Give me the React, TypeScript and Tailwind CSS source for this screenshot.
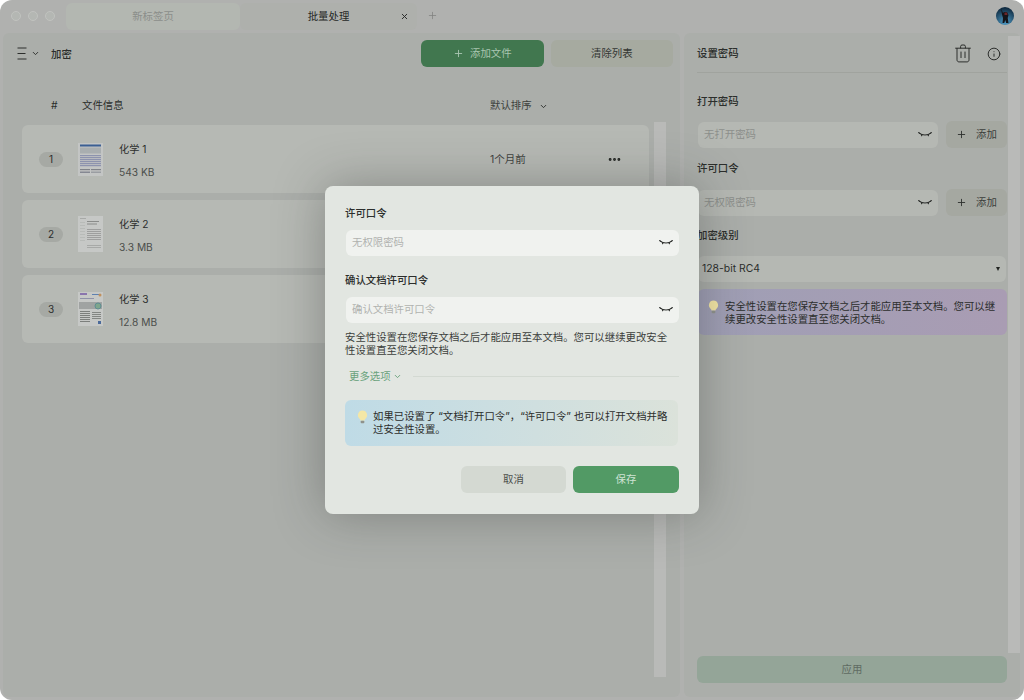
import { Plus, ChevronDown, X, Ellipsis, Info } from "lucide-react";

function EyeClosed({ className = "" }: { className?: string }) {
  return (
    <svg width="14" height="8" viewBox="0 0 14 8" fill="none" stroke="#2a2c2a" strokeWidth="1.1" strokeLinecap="round" className={className}>
      <path d="M1.5 2.2C3.5 4.6 10.5 4.6 12.5 2.2" />
      <path d="M1.5 2.2 0.6 1.6M12.5 2.2l.9-.6M4 3.9l-.5.8M10 3.9l.5.8" />
    </svg>
  );
}

function Bulb() {
  return (
    <svg width="11" height="14" viewBox="0 0 11 14" className="shrink-0">
      <path d="M5.5.6a4.6 4.6 0 0 0-2.7 8.3c.5.4.7 1 .8 1.6h3.8c.1-.6.3-1.2.8-1.6A4.6 4.6 0 0 0 5.5.6Z" fill="#f4e7a6" />
      <rect x="3.7" y="10.8" width="3.6" height="2.4" rx="0.8" fill="#8f928c" />
    </svg>
  );
}

function Trash() {
  return (
    <svg width="16" height="19" viewBox="0 0 16 19" fill="none" stroke="#2c2e2c" strokeWidth="1" strokeLinecap="round" strokeLinejoin="round">
      <path d="M.6 4.2h14.8" />
      <path d="M5.6 4V2.4c0-.9.6-1.4 1.4-1.4h2c.8 0 1.4.5 1.4 1.4V4" />
      <path d="M2 4.4v11.4c0 1.3.8 2.1 2.1 2.1h7.8c1.3 0 2.1-.8 2.1-2.1V4.4" />
      <path d="M6 8v5.6M10 8v5.6" />
    </svg>
  );
}

function Avatar() {
  return (
    <svg width="18" height="18" viewBox="0 0 18 18">
      <defs>
        <radialGradient id="sky" cx="50%" cy="85%" r="80%">
          <stop offset="0%" stopColor="#4f9dc8" />
          <stop offset="100%" stopColor="#0f2a40" />
        </radialGradient>
      </defs>
      <circle cx="9" cy="9" r="9" fill="url(#sky)" />
      <path d="M5 1.5 7 6l1-1h3l1.5 3-.8 3 .8 5H10l-.7-3-1 3H6.5l.5-5-1-3.5Z" fill="#15151a" />
      <path d="M8.5 5.5H11l.5 2.5H8.5Z" fill="#6d2528" />
    </svg>
  );
}

function DocOne() {
  return (
    <svg width="25" height="33" viewBox="0 0 25 33" className="shrink-0">
      <rect width="25" height="33" fill="#c3c5c4" />
      <rect x="2" y="1.5" width="21" height="2" fill="#3b5f93" />
      <rect x="2" y="4.5" width="21" height="6" fill="#a9aeb0" />
      {[12, 14, 16, 18, 20, 22].map((y) => (
        <rect key={y} x="2" y={y} width="21" height="1.2" fill="#8d93ae" />
      ))}
      <rect x="2" y="26" width="10" height="1.2" fill="#80838a" />
      <rect x="13" y="26" width="10" height="1.2" fill="#80838a" />
      <rect x="2" y="28.5" width="10" height="1.5" fill="#858892" />
      <rect x="13" y="28.5" width="10" height="1.5" fill="#9a9da2" />
    </svg>
  );
}

function DocTwo() {
  return (
    <svg width="25" height="36" viewBox="0 0 25 36" className="shrink-0">
      <rect width="25" height="36" fill="#c6c8c6" />
      <rect x="2" y="2" width="6" height="1" fill="#a8aaa8" />
      {[6, 9, 12, 15, 18, 21, 24].map((y) => (
        <rect key={y} x="2" y={y} width="5" height="0.6" fill="#b0b2b0" />
      ))}
      <rect x="9" y="5" width="12" height="1" fill="#8a8c8a" />
      <rect x="9" y="7.5" width="10" height="1" fill="#8a8c8a" />
      {[13, 15, 17, 19, 21, 23].map((y) => (
        <rect key={y} x="9" y={y} width="14" height="0.7" fill="#8d8f8d" />
      ))}
      <rect x="9" y="29" width="14" height="0.7" fill="#9a9c9a" />
      <rect x="9" y="31" width="14" height="0.7" fill="#9a9c9a" />
    </svg>
  );
}

function DocThree() {
  return (
    <svg width="25" height="34" viewBox="0 0 25 34" className="shrink-0">
      <rect width="25" height="34" fill="#c6c8c6" />
      <rect x="2" y="1" width="7" height="2" fill="#8a75ad" />
      <rect x="14" y="2" width="8" height="1" fill="#5d80b0" />
      <circle cx="22" cy="3" r="1.5" fill="#c0905d" />
      <rect x="2" y="6" width="14" height="1" fill="#8f92a8" />
      <rect x="1" y="10" width="23" height="7" fill="#a0a3a2" />
      <circle cx="20" cy="14" r="3" fill="#7fa68d" stroke="#5f8d92" />
      {[19, 21, 23, 25, 27, 29].map((y) => (
        <rect key={y} x="2" y={y} width="10" height="0.9" fill="#747674" />
      ))}
      {[20, 22, 24, 26].map((y) => (
        <rect key={y} x="14" y={y} width="9" height="0.9" fill="#7c7e7c" />
      ))}
      <rect x="20" y="29" width="3" height="3" fill="#4b6a9a" />
    </svg>
  );
}

const files = [
  { n: 1, name: "化学 1", size: "543 KB", date: "1个月前", Doc: DocOne },
  { n: 2, name: "化学 2", size: "3.3 MB", date: "", Doc: DocTwo },
  { n: 3, name: "化学 3", size: "12.8 MB", date: "", Doc: DocThree },
];

function FileRow({ file }: { file: (typeof files)[number] }) {
  return (
    <div className="flex h-[68px] items-center rounded-[6px] bg-[#b6b9b4] pl-[17px]">
      <span className="flex h-[15px] w-[24px] items-center justify-center rounded-full bg-[#a6a9a4] text-[10px] text-[#2c2e2c]">{file.n}</span>
      <div className="ml-[15px] flex w-[25px] justify-center">
        <file.Doc />
      </div>
      <div className="ml-[16px] flex w-[371px] flex-col gap-[10px] pt-[4px]">
        <span className="text-[10.2px] leading-[13px] text-[#2c2e2c]">{file.name}</span>
        <span className="text-[10.2px] leading-[13px] text-[#4b4e4b]">{file.size}</span>
      </div>
      <span className="w-[117px] pt-[1px] text-[10.5px] text-[#3f423f]">{file.date}</span>
      {file.date && <Ellipsis size={15} strokeWidth={2.6} className="text-[#222422]" />}
    </div>
  );
}

function SideInput({ placeholder }: { placeholder: string }) {
  return (
    <div className="flex items-center gap-[8px]">
      <div className="flex h-[26px] w-[240px] items-center justify-between rounded-[6px] bg-[#b5b8b3] pl-[6px] pr-[6px] text-[10.4px] text-[#8c8f8b]">
        {placeholder}
        <EyeClosed />
      </div>
      <div className="flex h-[27px] w-[61px] items-center justify-center gap-[9px] rounded-[6px] bg-[#a5a8a1] text-[10.4px] text-[#3c3f3c]">
        <Plus size={11} strokeWidth={2} className="text-[#2f312f]" />
        添加
      </div>
    </div>
  );
}

function ModalInput({ placeholder }: { placeholder: string }) {
  return (
    <div className="ml-px flex h-[26px] items-center justify-between rounded-[6px] bg-[#f0f2ef] px-[6px] text-[10.4px] text-[#b0b3af]">
      {placeholder}
      <EyeClosed />
    </div>
  );
}

export default function App() {
  return (
    <div className="relative flex h-[700px] w-[1024px] flex-col overflow-hidden rounded-[12px] bg-[#b0b1af] font-['Inter','Noto_Sans_CJK_SC',sans-serif] text-[#2c2e2c]">
      <div className="flex h-[33px] shrink-0 items-start">
        <div className="flex gap-[7px] pl-[11px] pt-[11px]">
          <span className="h-[10px] w-[10px] rounded-full border border-[#c0c2bf] bg-[#b4b7b3]" />
          <span className="h-[10px] w-[10px] rounded-full border border-[#c0c2bf] bg-[#b4b7b3]" />
          <span className="h-[10px] w-[10px] rounded-full border border-[#c0c2bf] bg-[#b4b7b3]" />
        </div>
        <div className="ml-[11px] mt-[3px] flex h-[27px] w-[174px] items-center justify-center rounded-[6px] bg-[#b3b7b1] text-[10.4px] text-[#8b8e8a]">新标签页</div>
        <div className="relative mt-[3px] flex h-[27px] w-[177px] items-center justify-center rounded-[6px] bg-[#aeb0ac] text-[10.4px] text-[#262826]">
          批量处理
          <X size={9} strokeWidth={2.5} className="absolute right-[8px] top-[9px] text-[#262826]" />
        </div>
        <Plus size={11} strokeWidth={1.6} className="ml-[10px] mt-[10px] text-[#7e807e]" />
        <div className="ml-auto mr-[10px] mt-[7px]">
          <Avatar />
        </div>
      </div>

      <div className="flex flex-1 gap-[4px] pb-[3px] pl-[3px] pr-[4px]">
        <div className="relative w-[677px] rounded-[6px] bg-[#abaeaa]">
          <div className="flex h-[34px] items-start pl-[14px] pt-[7px]">
            <div className="flex h-[27px] w-[34px] items-center gap-[3px]">
              <svg width="11" height="13" viewBox="0 0 11 13" stroke="#2c2e2c" strokeWidth="1">
                <path d="M.5 1h9M.5 6.5h8M.5 12h9" />
              </svg>
              <ChevronDown size={9} strokeWidth={2.5} />
            </div>
            <span className="mt-[8px] text-[10.4px] font-medium leading-[13px]">加密</span>
            <div className="ml-[349px] flex h-[27px] w-[123px] items-center justify-center gap-[6px] rounded-[6px] bg-[#41774f] text-[10.4px] text-[#a9c5b0]">
              <Plus size={11} strokeWidth={2} />
              添加文件
            </div>
            <div className="ml-[7px] flex h-[27px] w-[122px] items-center justify-center rounded-[6px] bg-[#a6aaa0] text-[10.4px] text-[#333633]">清除列表</div>
          </div>
          <div className="flex h-[58px] items-center pl-[48px] pt-[20px] text-[10.4px] text-[#2c2e2c]">
            <span className="w-[31px]">#</span>
            <span className="w-[408px]">文件信息</span>
            <span className="text-[#3c3f3c]">默认排序</span>
            <ChevronDown size={9} strokeWidth={2.5} className="ml-[7px]" />
          </div>
          <div className="ml-[19px] flex w-[627px] flex-col gap-[7px]">
            {files.map((f) => (
              <FileRow key={f.n} file={f} />
            ))}
          </div>
          <div className="absolute left-[651px] top-[89px] h-[555px] w-[12px] bg-[#b9bab8]" />
        </div>

        <div className="relative flex w-[336px] flex-col rounded-[6px] bg-[#abaeaa] px-[13px]">
          <div className="flex h-[40px] items-center justify-between border-b border-[#a0a39e] pt-[2px]">
            <span className="text-[10.4px] font-medium">设置密码</span>
            <div className="flex items-center gap-[16px] pr-[6px]">
              <Trash />
              <Info size={14} strokeWidth={1.7} className="text-[#2c2e2c]" />
            </div>
          </div>
          <div className="mt-[22px] text-[10.4px] font-medium leading-[13px]">打开密码</div>
          <div className="mt-[13px] pl-px">
            <SideInput placeholder="无打开密码" />
          </div>
          <div className="mt-[14px] text-[10.4px] font-medium leading-[13px]">许可口令</div>
          <div className="mt-[14px] pl-px">
            <SideInput placeholder="无权限密码" />
          </div>
          <div className="mt-[13px] text-[10.4px] font-medium leading-[13px]">加密级别</div>
          <div className="ml-px mt-[14px] flex h-[26px] w-[308px] items-center justify-between rounded-[6px] bg-[#b5b8b3] px-[4px] pr-[6px] text-[10.4px]">
            128-bit RC4
            <span className="h-0 w-0 border-x-[2.5px] border-t-[4px] border-x-transparent border-t-[#222422]" />
          </div>
          <div className="ml-px mt-[7px] flex h-[46px] w-[309px] gap-[6px] rounded-[6px] bg-[linear-gradient(90deg,#9f9fb5,#a99cb3)] pl-[10px] pr-[9px] pt-[11px] text-[10.4px] leading-[13px] text-[#2c2e2c]">
            <Bulb />
            <span>安全性设置在您保存文档之后才能应用至本文档。您可以继续更改安全性设置直至您关闭文档。</span>
          </div>
          <div className="mt-auto mb-[14px] flex h-[27px] items-center justify-center rounded-[6px] bg-[#94a598] text-[10.4px] text-[#5f6b62]">应用</div>
          <div className="absolute right-0 top-[3px] h-[617px] w-[12px] bg-[#b9bab8]" />
        </div>
      </div>

      <div className="absolute left-[325px] top-[186px] h-[328px] w-[374px] rounded-[8px] bg-[#e2e6e1] px-[20px] pt-[21px] shadow-[0_0_50px_rgba(40,42,40,0.35)]">
        <div className="text-[10.4px] font-medium leading-[13px]">许可口令</div>
        <div className="mt-[10px]">
          <ModalInput placeholder="无权限密码" />
        </div>
        <div className="mt-[18px] text-[10.4px] font-medium leading-[13px]">确认文档许可口令</div>
        <div className="mt-[10px]">
          <ModalInput placeholder="确认文档许可口令" />
        </div>
        <p className="mt-[8px] pr-[8px] text-[10.4px] leading-[13px] text-[#3c3f3c]">安全性设置在您保存文档之后才能应用至本文档。您可以继续更改安全性设置直至您关闭文档。</p>
        <div className="mt-[13px] flex items-center pl-[4px] text-[10.4px] leading-[13px] text-[#6aa27c]">
          更多选项
          <ChevronDown size={9} strokeWidth={2.5} className="ml-[2px]" />
          <span className="ml-[11px] h-px flex-1 bg-[#d3d9d2]" />
        </div>
        <div className="mt-[17px] flex h-[46px] w-[333px] gap-[5px] rounded-[6px] bg-[linear-gradient(90deg,#bfdbe6,#dbe2da)] pl-[12px] pr-[10px] pt-[10px] text-[10.4px] leading-[13px] text-[#2c2e2c]">
          <Bulb />
          <span>如果已设置了 “文档打开口令”，“许可口令” 也可以打开文档并略过安全性设置。</span>
        </div>
        <div className="mt-[20px] flex justify-end gap-[7px]">
          <div className="flex h-[27px] w-[105px] items-center justify-center rounded-[6px] bg-[#d4d9d2] text-[10.4px] text-[#4b4e4b]">取消</div>
          <div className="flex h-[27px] w-[106px] items-center justify-center rounded-[6px] bg-[#529a65] text-[10.4px] text-[#cfe3d4]">保存</div>
        </div>
      </div>
    </div>
  );
}
